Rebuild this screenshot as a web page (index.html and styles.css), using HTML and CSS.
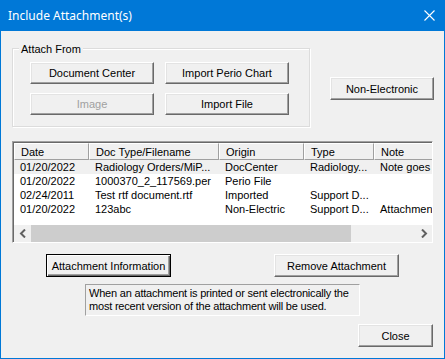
FILE: index.html
```html
<!DOCTYPE html>
<html lang="en">
<head>
  <meta charset="UTF-8">
  <title>Include Attachment(s)</title>
  <link rel="stylesheet" href="styles.css">
</head>
<body>
  <div class="window">
    <div class="titlebar">
      <span class="title">Include Attachment(s)</span>
      <svg class="close-x" width="11" height="11" viewBox="0 0 11 11">
        <path d="M0.5 0.5 L10.5 10.5 M10.5 0.5 L0.5 10.5" stroke="#fff" stroke-width="1.1" fill="none"/>
      </svg>
    </div>
    <div class="content">
      <div class="top-row">
        <div class="group">
          <span class="group-label">Attach From</span>
          <div class="group-grid">
            <button class="btn">Document Center</button>
            <button class="btn">Import Perio Chart</button>
            <button class="btn" disabled>Image</button>
            <button class="btn">Import File</button>
          </div>
        </div>
        <button class="btn btn-nonelec">Non-Electronic</button>
      </div>

      <div class="list">
        <div class="list-head">
          <div class="col">Date</div>
          <div class="col">Doc Type/Filename</div>
          <div class="col">Origin</div>
          <div class="col">Type</div>
          <div class="col">Note</div>
        </div>
        <div class="list-body">
          <div class="row selected">
            <div class="cell">01/20/2022</div>
            <div class="cell">Radiology Orders/MiP...</div>
            <div class="cell">DocCenter</div>
            <div class="cell">Radiology...</div>
            <div class="cell">Note goes</div>
          </div>
          <div class="row">
            <div class="cell">01/20/2022</div>
            <div class="cell">1000370_2_117569.per</div>
            <div class="cell">Perio File</div>
            <div class="cell"></div>
            <div class="cell"></div>
          </div>
          <div class="row">
            <div class="cell">02/24/2011</div>
            <div class="cell">Test rtf document.rtf</div>
            <div class="cell">Imported</div>
            <div class="cell">Support D...</div>
            <div class="cell"></div>
          </div>
          <div class="row">
            <div class="cell">01/20/2022</div>
            <div class="cell">123abc</div>
            <div class="cell">Non-Electric</div>
            <div class="cell">Support D...</div>
            <div class="cell">Attachmen</div>
          </div>
        </div>
        <div class="hscroll">
          <div class="arrow">
            <svg width="8" height="9" viewBox="0 0 8 9"><path d="M6 0.5 L2 4.5 L6 8.5" stroke="#606060" stroke-width="2" fill="none"/></svg>
          </div>
          <div class="thumb"></div>
          <div class="track"></div>
          <div class="arrow">
            <svg width="8" height="9" viewBox="0 0 8 9"><path d="M2 0.5 L6 4.5 L2 8.5" stroke="#606060" stroke-width="2" fill="none"/></svg>
          </div>
        </div>
      </div>

      <div class="action-row">
        <button class="btn btn-wide btn-default">Attachment Information</button>
        <button class="btn btn-wide btn-remove">Remove Attachment</button>
      </div>

      <div class="notice">When an attachment is printed or sent electronically the most recent version of the attachment will be used.</div>

      <button class="btn btn-close">Close</button>
    </div>
  </div>
</body>
</html>
```

FILE: styles.css
```css
body {
  margin: 0;
  background: #f0f0f0;
  font-family: 'Liberation Sans', Arial, sans-serif;
  font-size: 11px;
  color: #000;
}
.window {
  width: 445px;
  height: 359px;
  box-sizing: border-box;
  border: 1px solid #0078d7;
  border-top: none;
  background: #f0f0f0;
}
.titlebar {
  height: 31px;
  background: #0078d7;
  color: #fff;
  display: flex;
  align-items: center;
  justify-content: space-between;
  padding: 0 9px 0 8px;
  margin: 0 -1px;
}
.title {
  font-family: 'Noto Sans', sans-serif;
  font-size: 12px;
  margin-top: -1px;
}
.close-x {
  margin-right: 1px;
}
.content {
  padding: 17px 0 0 11px;
}
.top-row {
  display: flex;
  align-items: flex-start;
}
.group {
  position: relative;
  width: 298px;
  height: 79px;
  box-sizing: border-box;
  border: 1px solid #dcdcdc;
  box-shadow: inset 1px 1px 0 #fff, 1px 1px 0 #fff;
  padding: 13px 0 0 17px;
}
.group-label {
  position: absolute;
  left: 6px;
  top: -7px;
  padding: 0 2px;
  background: #f0f0f0;
  line-height: 14px;
}
.group-grid {
  display: grid;
  grid-template-columns: 124px 124px;
  grid-auto-rows: 22px;
  column-gap: 11px;
  row-gap: 9px;
}
.btn {
  font-family: 'Liberation Sans', Arial, sans-serif;
  font-size: 11px;
  color: #000;
  background: #f0f0f0;
  box-sizing: border-box;
  border: 1px solid;
  border-color: #fff #696969 #696969 #fff;
  box-shadow: inset -1px -1px 0 #a0a0a0, inset 1px 1px 0 #e3e3e3;
  padding: 0;
  margin: 0;
  border-radius: 0;
}
.btn:disabled {
  color: #a0a0a0;
}
.btn-nonelec {
  margin: 29px 0 0 20px;
  width: 104px;
  height: 23px;
}
.list {
  margin-top: 14px;
  width: 421px;
  height: 102px;
  box-sizing: border-box;
  border: 1px solid;
  border-color: #a0a0a0 #fff #fff #a0a0a0;
  box-shadow: inset 1px 1px 0 #696969;
  padding: 1px 0 0 1px;
  background: #fff;
  display: flex;
  flex-direction: column;
  overflow: hidden;
}
.list-head,
.row {
  display: grid;
  grid-template-columns: 75px 130px 85px 70px 59px;
}
.list-head {
  height: 17px;
  background: #f0f0f0;
}
.col {
  box-sizing: border-box;
  border: 1px solid;
  border-color: #fff #a0a0a0 #a0a0a0 #fff;
  padding: 0 0 0 6px;
  line-height: 16px;
  white-space: nowrap;
  overflow: hidden;
}
.list-body {
  flex: 1;
}
.row {
  height: 14px;
  line-height: 14px;
}
.row.selected {
  background: #f0f0f0;
}
.cell {
  padding-left: 6px;
  white-space: nowrap;
  overflow: hidden;
}
.hscroll {
  height: 17px;
  display: flex;
  background: #f0f0f0;
}
.arrow {
  width: 17px;
  display: flex;
  align-items: center;
  justify-content: center;
}
.thumb {
  width: 320px;
  background: #cdcdcd;
}
.track {
  flex: 1;
}
.action-row {
  display: flex;
  margin-top: 11px;
}
.btn-wide {
  width: 125px;
  height: 23px;
}
.btn-default {
  margin-left: 34px;
  border-color: #000;
  box-shadow: inset 1px 1px 0 #fff, inset -1px -1px 0 #696969, inset -2px -2px 0 #a0a0a0;
}
.btn-remove {
  margin-left: 103px;
}
.notice {
  margin: 7px 0 0 73px;
  width: 275px;
  height: 32px;
  box-sizing: border-box;
  border: 1px solid;
  border-color: #a0a0a0 #fff #fff #a0a0a0;
  padding: 2px 2px 2px 3px;
  line-height: 13px;
  letter-spacing: -0.2px;
}
.btn-close {
  display: block;
  margin: 8px 0 0 346px;
  width: 75px;
  height: 23px;
}
```
